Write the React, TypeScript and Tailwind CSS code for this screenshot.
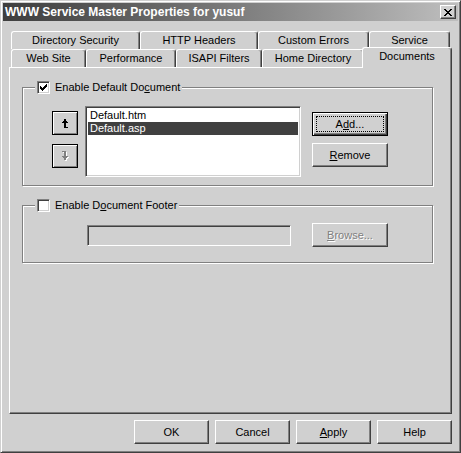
import React from 'react';

const raised =
  'border border-t-white border-l-white border-r-[#404040] border-b-[#404040] shadow-[inset_-1px_-1px_0_#808080]';
const sunken =
  'border border-t-[#808080] border-l-[#808080] border-r-white border-b-white shadow-[inset_1px_1px_0_#404040,inset_-1px_-1px_0_#d0d0d0]';
const disabledText = 'text-[#808080] [text-shadow:1px_1px_0_#fff]';

function Checkbox({ checked }: { checked?: boolean }) {
    return (
        <span className={`w-[13px] h-[13px] bg-white flex items-center justify-center ${sunken}`}>
            {checked && (
                <svg width="7" height="7" viewBox="0 0 7 7" shapeRendering="crispEdges">
                    <path d="M0 2h1v3h-1zM1 3h1v3h-1zM2 4h1v3h-1zM3 3h1v3h-1zM4 2h1v3h-1zM5 1h1v3h-1zM6 0h1v3h-1z" fill="#000" />
                </svg>
            )}
        </span>
    );
}

function Tab({ label, className, active }: { label: string; className: string; active?: boolean }) {
    return (
        <div
            className={`${className} flex items-center justify-center border-t border-l border-white border-r border-r-[#404040] shadow-[inset_-1px_0_0_#808080] rounded-t-[3px] ${
                active ? 'relative z-10 -mt-[2px] -mx-[2px] h-[21px] self-start bg-[#d0d0d0] pb-[3px]' : 'h-full'
            }`}
        >
            {label}
        </div>
    );
}

function Button({ children, className = '', disabled }: { children: React.ReactNode; className?: string; disabled?: boolean }) {
    return (
        <div className={`${className} h-[24px] flex items-center justify-center bg-[#d0d0d0] ${raised} ${disabled ? disabledText : ''}`}>
            {children}
        </div>
    );
}

function ArrowGlyph({ color }: { color: string }) {
    return <path d="M2 0h2v9h-2zM1 2h4v1h-4zM0 3h6v1h-6zM2 8h4v1h-4z" fill={color} />;
}

export default function App() {
    return (
        <div className="w-[461px] h-[453px] bg-[#d0d0d0] text-[11px] leading-none text-black font-['Liberation_Sans',Arial,sans-serif] border border-t-[#d0d0d0] border-l-[#d0d0d0] border-r-[#404040] border-b-[#404040] shadow-[inset_1px_1px_0_#fff,inset_-1px_-1px_0_#808080] p-[2px] overflow-hidden">
            {/* title bar */}
            <div className="h-[18px] flex items-center justify-between pl-[2px] pr-[2px] bg-gradient-to-r from-[#3e3e3e] to-[#bebebe]">
                <span className="text-white font-bold text-[12px]">WWW Service Master Properties for yusuf</span>
                <span className={`w-[16px] h-[14px] flex items-center justify-center bg-[#d0d0d0] ${raised}`}>
                    <svg width="8" height="7" viewBox="0 0 8 7" shapeRendering="crispEdges">
                        <path d="M0 0h2v1h-2zM6 0h2v1h-2zM1 1h2v1h-2zM5 1h2v1h-2zM2 2h4v1h-4zM3 3h2v1h-2zM2 4h4v1h-4zM1 5h2v1h-2zM5 5h2v1h-2zM0 6h2v1h-2zM6 6h2v1h-2z" fill="#000" />
                    </svg>
                </span>
            </div>

            <div className="ml-[6px] mt-[10px] w-[443px]">
                {/* tab rows */}
                <div className="flex h-[18px] pl-[2px]">
                    <Tab label="Directory Security" className="w-[129px]" />
                    <Tab label="HTTP Headers" className="w-[118px]" />
                    <Tab label="Custom Errors" className="w-[111px]" />
                    <Tab label="Service" className="w-[81px]" />
                </div>
                <div className="flex h-[18px] pl-[2px]">
                    <Tab label="Web Site" className="w-[75px]" />
                    <Tab label="Performance" className="w-[90px]" />
                    <Tab label="ISAPI Filters" className="w-[86px]" />
                    <Tab label="Home Directory" className="w-[102px]" />
                    <Tab label="Documents" className="w-[90px]" active />
                </div>

                {/* tab panel */}
                <div className="h-[347px] border border-t-white border-l-white border-r-[#404040] border-b-[#404040] shadow-[inset_-1px_-1px_0_#808080] pt-[13px]">
                    <fieldset className="ml-[12px] w-[411px] border border-[#808080] shadow-[1px_1px_0_#fff,inset_1px_1px_0_#fff] pb-[8px]">
                        <legend className="ml-[12px] px-[2px] bg-[#d0d0d0]">
                            <span className="flex items-center gap-[5px]">
                                <Checkbox checked />
                                <span>Enable Default Do<u>c</u>ument</span>
                            </span>
                        </legend>
                        <div className="flex pl-[29px] pt-[12px]">
                            <div className="flex flex-col gap-[9px] mt-[5px]">
                                <div className="w-[26px] h-[24px] flex items-center justify-center border border-black shadow-[inset_1px_1px_0_#fff,inset_-1px_-1px_0_#808080]">
                                    <svg width="6" height="9" viewBox="0 0 6 9" shapeRendering="crispEdges">
                                        <ArrowGlyph color="#000" />
                                    </svg>
                                </div>
                                <div className="w-[26px] h-[24px] flex items-center justify-center border border-black shadow-[inset_1px_1px_0_#fff,inset_-1px_-1px_0_#808080]">
                                    <svg width="7" height="10" viewBox="0 0 7 10" shapeRendering="crispEdges">
                                        <g transform="translate(7 10) rotate(180)">
                                            <ArrowGlyph color="#fff" />
                                        </g>
                                        <g transform="translate(6 9) rotate(180)">
                                            <ArrowGlyph color="#808080" />
                                        </g>
                                    </svg>
                                </div>
                            </div>
                            <div className={`ml-[7px] w-[216px] h-[71px] bg-white p-[2px] ${sunken}`}>
                                <div className="h-[13px] flex items-center px-[2px]">Default.htm</div>
                                <div className="h-[13px] flex items-center px-[2px] bg-[#404040] text-white">Default.asp</div>
                            </div>
                            <div className="ml-[11px] mt-[6px] flex flex-col gap-[7px]">
                                <div className="relative w-[76px] h-[24px] flex items-center justify-center border border-black shadow-[inset_1px_1px_0_#fff,inset_-1px_-1px_0_#404040,inset_-2px_-2px_0_#808080]">
                                    <span className="absolute inset-[3px] border border-dotted border-black" />
                                    A<u>d</u>d...
                                </div>
                                <Button className="w-[76px]">
                                    <u>R</u>emove
                                </Button>
                            </div>
                        </div>
                    </fieldset>

                    <fieldset className="ml-[12px] mt-[13px] w-[411px] border border-[#808080] shadow-[1px_1px_0_#fff,inset_1px_1px_0_#fff] pb-[15px]">
                        <legend className="ml-[12px] px-[2px] bg-[#d0d0d0]">
                            <span className="flex items-center gap-[5px]">
                                <Checkbox />
                                <span>Enable D<u>o</u>cument Footer</span>
                            </span>
                        </legend>
                        <div className="flex items-center pl-[64px] pt-[11px]">
                            <div className={`w-[204px] h-[21px] bg-[#d0d0d0] ${sunken}`} />
                            <Button className="ml-[21px] w-[76px] h-[23px]" disabled>
                                <u>B</u>rowse...
                            </Button>
                        </div>
                    </fieldset>
                </div>

                {/* dialog buttons */}
                <div className="mt-[6px] flex justify-end gap-[6px]">
                    <Button className="w-[75px]">OK</Button>
                    <Button className="w-[75px]">Cancel</Button>
                    <Button className="w-[75px]">
                        <u>A</u>pply
                    </Button>
                    <Button className="w-[75px]">Help</Button>
                </div>
            </div>
        </div>
    );
}
